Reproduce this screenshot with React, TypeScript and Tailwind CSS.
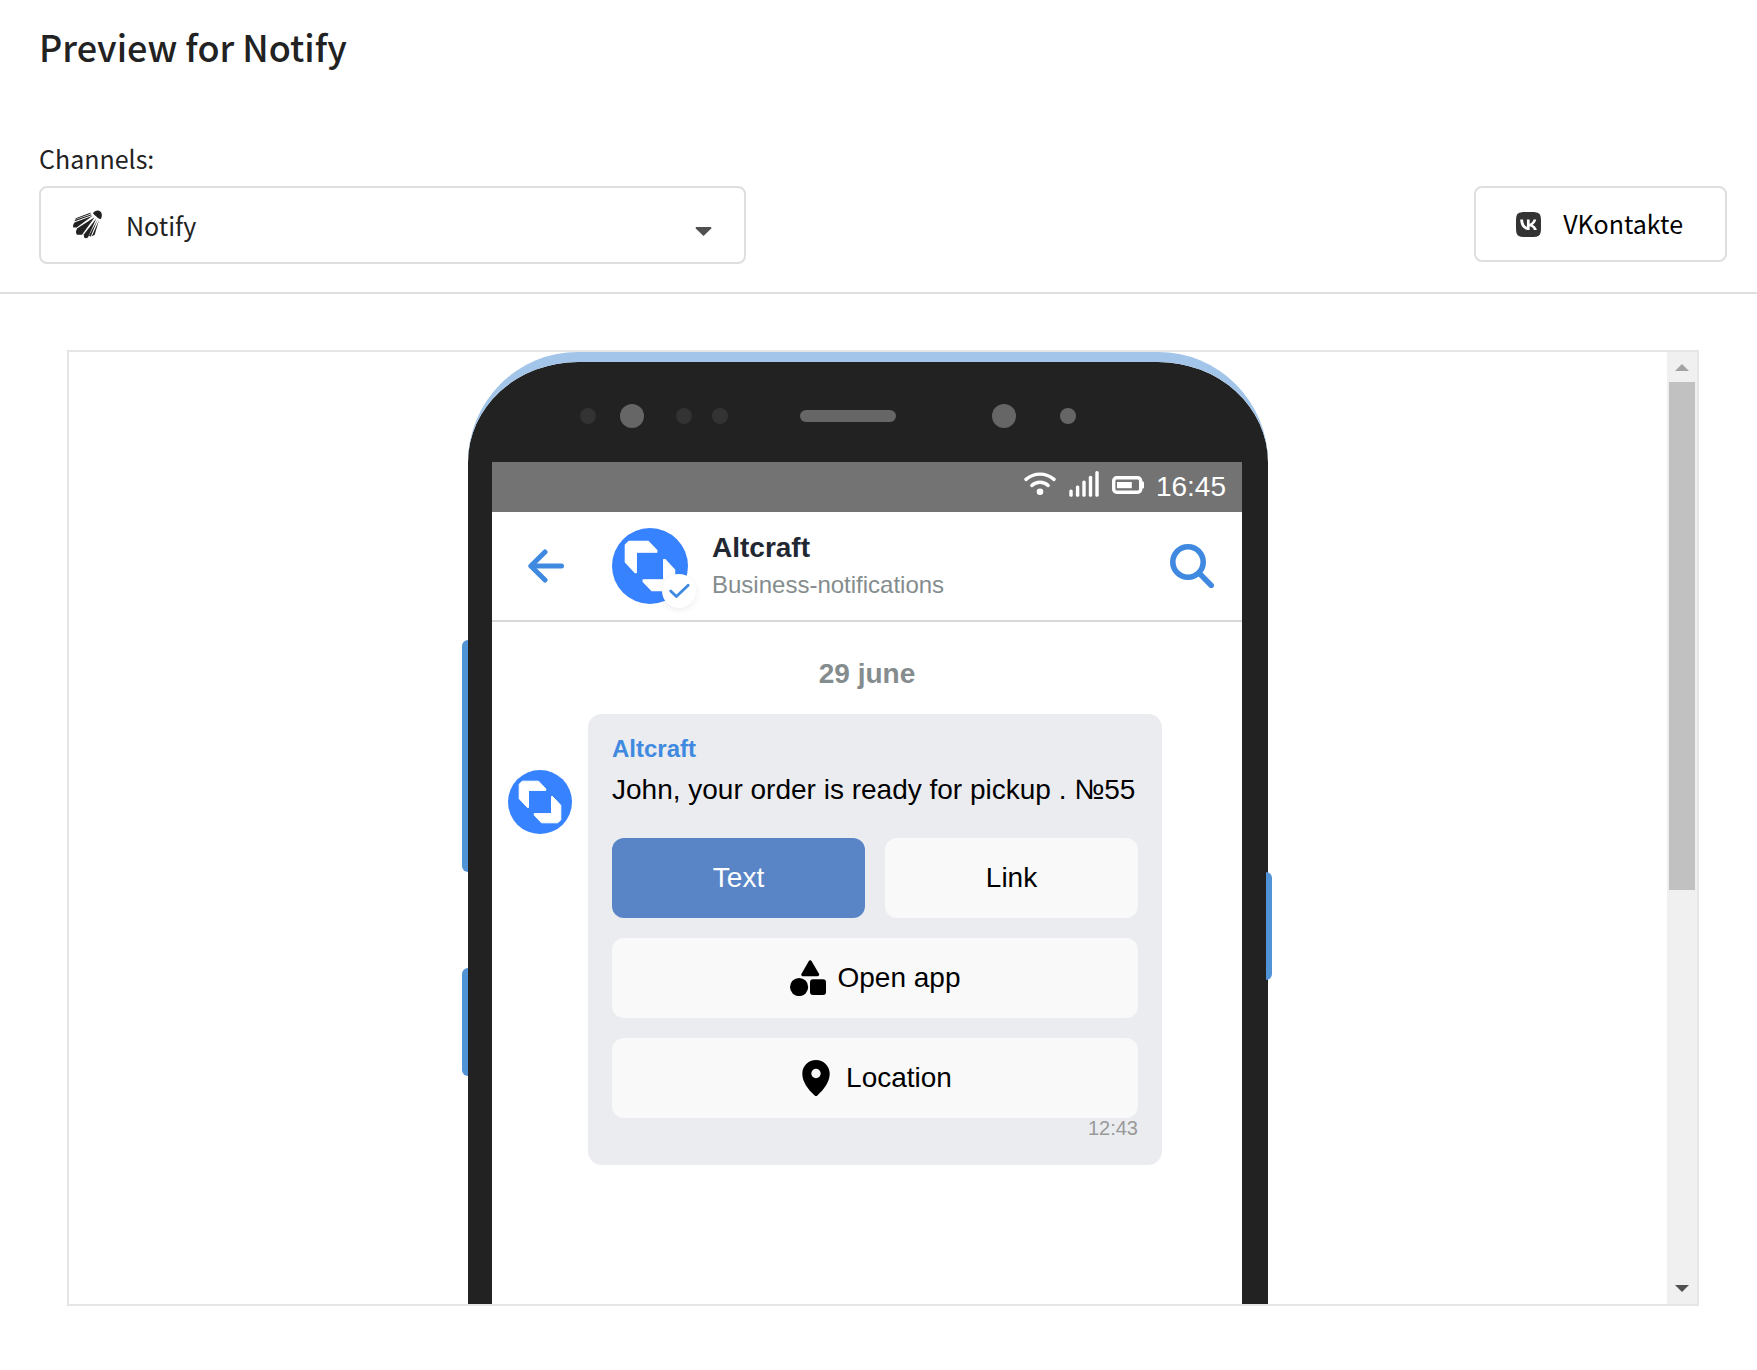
import React, { useState } from 'react';
import { SiVk } from 'react-icons/si';

const NotifyIcon = () => (
  <svg viewBox="0 0 87 86" className="w-[29px] h-[29px]" fill="#222">
    <path d="M60 9C65 1 76 -1 82 4C88 9 88 19 83 27C78 25 74 24 70 19C66 15 63 13 60 9Z" />
    <path d="M52 8L8 24L7 27L53 11Z" />
    <path d="M54 13L6 29L5 33L56 15Z" />
    <path d="M59 17L6 36C1 40 -1 46 1 52L11 52Z" />
    <path d="M65 21L13 54C8 60 8 69 12 74L27 74Z" />
    <path d="M70 25L33 72C31 79 34 84 39 84L45 82Z" />
    <path d="M74 28L48 76L53 80Z" />
    <path d="M78 30L56 79L65 74Z" />
  </svg>
);

const Logo = () => (
  <svg viewBox="0 0 64 64" className="w-full h-full">
    <circle cx="32" cy="32" r="32" fill="#3783ff" />
    <g fill="#fff" stroke="#fff" strokeWidth="1" strokeLinejoin="round">
      <path d="M11.2 14.2L14.2 11.2H30.5L37.8 18.8V20.4H20.5V37.5H19.4L11.2 28.7Z" />
      <path d="M52.8 49.8L49.8 52.8H33.5L26.2 45.2V43.6H43.5V26.5H44.6L52.8 35.3Z" />
    </g>
  </svg>
);

const AppsIcon = () => (
  <svg viewBox="0 0 36 36" className="w-9 h-9">
    <path d="M20.2 2L13 14.5H27.5Z" stroke="#000" strokeWidth="3.4" strokeLinejoin="round" />
    <circle cx="9.1" cy="27" r="9.1" />
    <rect x="20" y="19.3" width="16" height="15.8" rx="3" />
  </svg>
);

const PinIcon = () => (
  <svg viewBox="0 0 36 36" className="w-9 h-9">
    <path
      fillRule="evenodd"
      d="M18 0C10.4 0 4.3 6 4.3 13.5C4.3 22 10 29.5 16.6 35.4C17.5 36.2 18.5 36.2 19.4 35.4C26 29.5 31.7 22 31.7 13.5C31.7 6 25.6 0 18 0ZM18 18.2A4.7 4.7 0 1 1 18 8.8A4.7 4.7 0 0 1 18 18.2Z"
    />
  </svg>
);

const StatusBar = () => (
  <div className="flex items-center justify-end gap-3 h-[50px] pr-4 bg-[#737373] text-white">
    <svg viewBox="0 0 33 30" className="w-[33px] h-[30px]" fill="none" stroke="#fff" strokeWidth="3.4" strokeLinecap="round">
      <path d="M2 7.4C10.2 0.3 21.8 0.3 30 7.4" />
      <path d="M7.8 13.4C12.4 9.2 19.6 9.2 24.2 13.4" />
      <circle cx="16" cy="19.8" r="3.3" fill="#fff" stroke="none" />
    </svg>
    <svg viewBox="0 1 31 30" className="w-[31px] h-[30px] overflow-visible" fill="#fff">
      <rect x="0.3" y="18.4" width="3.4" height="7.4" rx="1.5" />
      <rect x="6.9" y="14.4" width="3.4" height="11.4" rx="1.5" />
      <rect x="13.3" y="9.4" width="3.4" height="16.4" rx="1.5" />
      <rect x="19.8" y="4.8" width="3.4" height="21" rx="1.5" />
      <rect x="26.3" y="0" width="3.4" height="25.8" rx="1.5" />
    </svg>
    <svg viewBox="0 1 32 30" className="w-8 h-[30px]">
      <rect x="1.7" y="6.7" width="27" height="14.6" rx="3" fill="none" stroke="#fff" strokeWidth="3.4" />
      <rect x="29.5" y="10.5" width="2.5" height="7" rx="1" fill="#fff" />
      <rect x="5" y="11" width="14.8" height="6.2" fill="#fff" />
    </svg>
    <span className="text-[28px] leading-10">16:45</span>
  </div>
);

const ChatHeader = () => (
  <header className="flex items-center py-4 pl-9 pr-7 border-b-2 border-[#d7d8d9]">
    <button type="button" aria-label="Back" className="shrink-0">
      <svg viewBox="0 0 36 36" className="w-9 h-9" fill="none" stroke="#3f8ae0" strokeWidth="5" strokeLinecap="round" strokeLinejoin="round">
        <path d="M33.5 18H4" />
        <path d="M17 4L2.8 18L17 32" />
      </svg>
    </button>
    <div className="relative shrink-0 w-[76px] h-[76px] ml-12">
      <Logo />
      <span className="absolute -right-2 -bottom-1 w-[34px] h-[34px] rounded-full bg-white shadow-[0_2px_6px_rgba(0,0,0,0.08)]">
        <svg viewBox="0 0 34 34" className="w-full h-full" fill="none" stroke="#3f8ae0" strokeWidth="2.8" strokeLinecap="round" strokeLinejoin="round">
          <path d="M8.7 17L14.4 22.6L26.2 11.3" />
        </svg>
      </span>
    </div>
    <div className="flex-1 min-w-0 ml-6 pb-0.5">
      <h2 className="text-[28px] leading-10 font-bold text-[#222831]">Altcraft</h2>
      <p className="text-[24px] leading-[34px] text-[#848c8e]">Business-notifications</p>
    </div>
    <button type="button" aria-label="Search" className="shrink-0">
      <svg viewBox="0 0 44 44" className="w-11 h-11" fill="none" stroke="#3f8ae0" strokeLinecap="round">
        <circle cx="18" cy="18" r="15.2" strokeWidth="5.6" />
        <path d="M30 30L41.3 41.5" strokeWidth="5.4" />
      </svg>
    </button>
  </header>
);

const Message = () => (
  <div className="flex items-start gap-4 pl-4">
    <div className="shrink-0 w-16 h-16 mt-14">
      <Logo />
    </div>
    <div className="w-[574px] px-6 pt-4 pb-[27px] rounded-[14px] bg-[#ebecf0] text-[28px] leading-10 text-black">
      <h3 className="mb-0.5 text-[24px] leading-[38px] font-bold text-[#3f8ae0]">Altcraft</h3>
      <p>John, your order is ready for pickup . №55</p>
      <div className="grid grid-cols-2 gap-5 mt-7">
        <button type="button" className="h-20 rounded-xl bg-[#5984c6] text-white">Text</button>
        <button type="button" className="h-20 rounded-xl bg-[#f9f9f9]">Link</button>
        <button type="button" className="col-span-2 flex items-center justify-center gap-3 h-20 rounded-xl bg-[#f9f9f9]">
          <AppsIcon />
          Open app
        </button>
        <button type="button" className="col-span-2 flex items-center justify-center gap-3 h-20 rounded-xl bg-[#f9f9f9]">
          <PinIcon />
          Location
        </button>
      </div>
      <time className="block text-right text-[20px] leading-5 text-[#999]">12:43</time>
    </div>
  </div>
);

const Phone = () => (
  <div className="relative w-[800px] h-[1560px] mx-auto">
    {/* Side keys */}
    <span className="absolute -left-1.5 top-72 w-1.5 h-[232px] rounded-l-md bg-[#5093d6]" />
    <span className="absolute -left-1.5 top-[616px] w-1.5 h-[108px] rounded-l-md bg-[#5093d6]" />
    <div className="h-full pl-6 pr-[26px] pb-[100px] rounded-[110px] border-y-10 border-[#a3c5e9] bg-[#222] bg-clip-padding">
      <div className="flex items-center h-[100px] pt-2 pl-[88px]">
        <i className="w-4 h-4 rounded-full bg-[#333]" />
        <i className="w-6 h-6 ml-6 rounded-full bg-[#666]" />
        <i className="w-4 h-4 ml-8 rounded-full bg-[#333]" />
        <i className="w-4 h-4 ml-5 rounded-full bg-[#333]" />
        <i className="w-24 h-3 ml-[72px] rounded-full bg-[#666]" />
        <i className="w-6 h-6 ml-24 rounded-full bg-[#666]" />
        <i className="w-4 h-4 ml-11 rounded-full bg-[#666]" />
      </div>
      <div className="h-[1340px] bg-white font-['Liberation_Sans',Arial,sans-serif]">
        <StatusBar />
        <ChatHeader />
        <p className="pt-8 pb-5 text-center text-[28px] leading-10 font-bold text-[#848c8e]">29 june</p>
        <Message />
      </div>
    </div>
    <span className="absolute -right-1 top-[520px] w-1.5 h-[108px] rounded-r-md bg-[#5093d6]" />
  </div>
);

const ScrollBar = () => (
  <div className="flex flex-col shrink-0 w-[30px] bg-[#f0f0f0]" aria-hidden="true">
    <svg viewBox="0 0 30 30" className="w-[30px] h-[30px]">
      <path d="M8 19H22L15 12Z" fill="#a3a3a3" />
    </svg>
    <div className="flex-1 px-0.5">
      <div className="h-[57%] bg-[#c1c1c1]" />
    </div>
    <svg viewBox="0 0 30 30" className="w-[30px] h-[30px]">
      <path d="M8 11H22L15 18Z" fill="#505050" />
    </svg>
  </div>
);

const App: React.FC = () => {
  const [channel, setChannel] = useState('notify');

  return (
    <main className="flex flex-col h-screen bg-white text-[#222] font-['Noto_Sans_CJK_SC',sans-serif]">
      <h1 className="pt-[22px] pl-[39px] text-[36px] leading-[48px] font-medium">Preview for Notify</h1>

      <div className="flex items-end justify-between pt-[70px] pb-7 pl-[39px] pr-[30px] border-b-2 border-[#dedede] text-[25px]">
        <div className="w-[707px]">
          <label htmlFor="channel" className="block leading-9">Channels:</label>
          <div className="relative mt-2.5">
            <select
              id="channel"
              value={channel}
              onChange={(e) => setChannel(e.target.value)}
              className="block w-full h-[78px] pt-0.5 pl-[85px] pr-16 border-2 border-[#dedede] rounded-lg bg-white appearance-none"
            >
              <option value="notify">Notify</option>
              <option value="vk">VKontakte</option>
            </select>
            <span className="absolute left-[34px] top-6 pointer-events-none">
              <NotifyIcon />
            </span>
            <svg viewBox="0 0 17 9" className="absolute right-[34px] top-[41px] w-[17px] h-[9px] pointer-events-none">
              <path d="M1 0H16L16.5 1.2L8.5 9L0.5 1.2Z" fill="#505050" />
            </svg>
          </div>
        </div>
        <button
          type="button"
          onClick={() => setChannel('vk')}
          className="flex items-center gap-[22px] h-[76px] mb-0.5 pl-10 pr-[42px] border-2 border-[#dedede] rounded-lg text-black"
        >
          <SiVk className="w-[25px] h-[25px] text-[#333]" />
          VKontakte
        </button>
      </div>

      <section className="flex flex-1 min-h-0 mt-14 mb-16 ml-[67px] mr-[58px] border-2 border-[#e5e5e5]">
        <div className="flex-1 overflow-y-auto [scrollbar-width:none]">
          <Phone />
        </div>
        <ScrollBar />
      </section>
    </main>
  );
};

export default App;
